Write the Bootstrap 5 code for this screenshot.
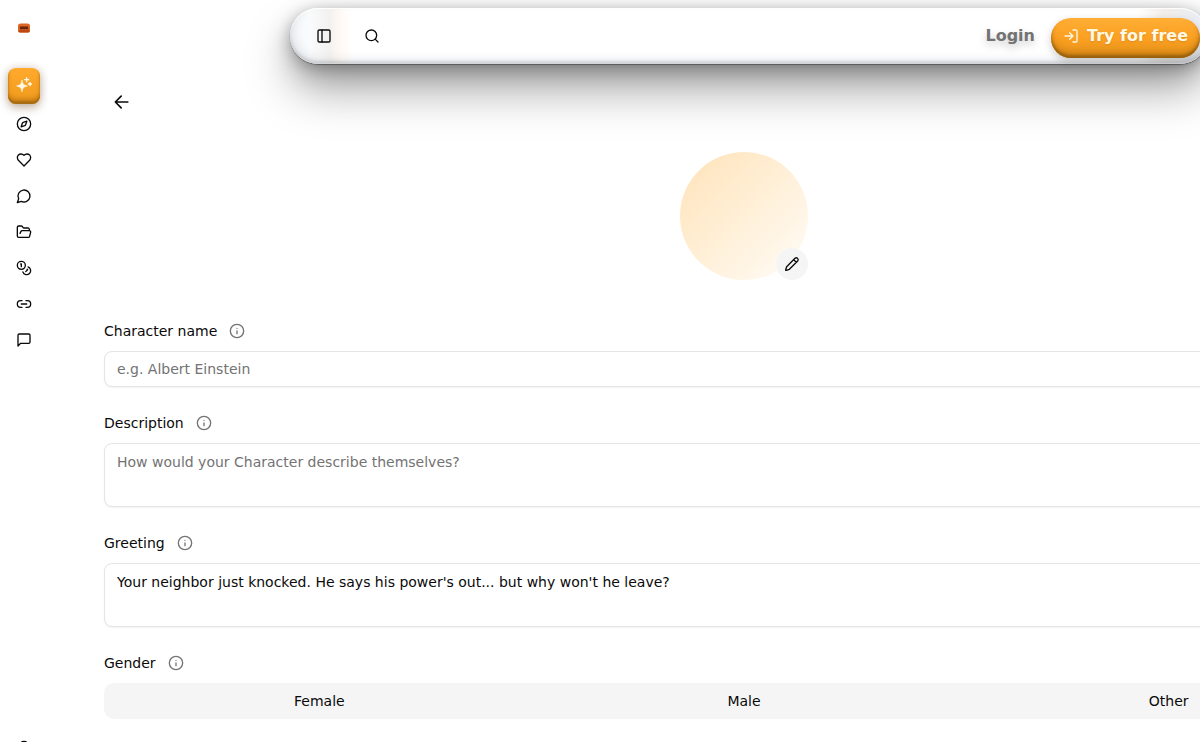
<!DOCTYPE html>
<html lang="en">
<head>
<meta charset="utf-8">
<meta name="viewport" content="width=device-width, initial-scale=1">
<title>Create character</title>
<link href="https://cdn.jsdelivr.net/npm/bootstrap@5.3.0/dist/css/bootstrap.min.css" rel="stylesheet">
<style>
body{font-family:"DejaVu Sans",sans-serif;font-size:14px;line-height:20px;color:#0a0a0a;background:#fff}
svg{display:block;flex:none;fill:none;stroke:currentColor;stroke-width:2;stroke-linecap:round;stroke-linejoin:round}
.i16{width:16px;height:16px}
.shell{height:100vh}
.side{width:48px;height:764px;padding:20px 8px 0}
.side a,.tool{color:#0a0a0a;width:32px;height:32px;display:flex;align-items:center;justify-content:center;padding:0;border:0;background:none}
.side .brand{height:16px;margin-bottom:32px}
.brand svg{stroke:none}
.side .create{height:36px;padding-bottom:3px;border-radius:8px;color:#fffbe8;background:linear-gradient(#ffaa2e,#f09a1c);box-shadow:inset 0 -3px 2px #a96c14,inset 0 -6px 4px #d1861a,0 4px 10px rgba(90,50,0,.3),0 0 8px rgba(90,50,0,.18)}
.create .star{fill:currentColor;stroke-width:1}
.topbar{height:56px;margin:8px -8px 0 242px;padding:0 8px 0 18px;border-radius:28px;position:relative;
background:linear-gradient(90deg,#f6f7f9 0,#fafbfc 20px,#f3f1f0 40px,#fff9f4 50px,#fff 62px,#fff calc(100% - 70px),#f1eee9 calc(100% - 44px),#e8edf5);
box-shadow:inset 0 -1px 0 #d4d5d8,inset 0 -3px 3px rgba(0,0,0,.12),inset 0 1px 1px #fff,inset 4px -5px 9px rgba(80,95,120,.12),0 1px 1px rgba(0,0,0,.35),0 3px 14px rgba(0,0,0,.2),0 8px 24px rgba(0,0,0,.22),0 26px 46px rgba(0,0,0,.34)}
.login{font-size:16px;line-height:24px;color:#737373;text-shadow:0 4px 8px rgba(0,0,0,.22)}
.try{font-size:16px;line-height:24px;height:40px;padding:0 12px 4px;margin-top:4px;border:0;border-radius:20px;color:#fff8e3;background:linear-gradient(#ffae35,#fba022 50%,#e8951b);box-shadow:inset 0 -3px 3px #96600f,inset 0 -7px 7px rgba(160,95,5,.35),0 3px 8px rgba(0,0,0,.2);text-shadow:0 1px 2px rgba(120,65,0,.2)}
.editor{width:1280px;margin:22px 0 0 56px;flex:none}
.back{margin-left:2px}
.portrait{width:128px;height:128px;margin:34px auto 41px;border-radius:50%;background:linear-gradient(135deg,#ffe2b8,#fffdf8);position:relative}
.edit{right:0;bottom:0;border-radius:50%;background:#f5f5f5}
.edit,.edit:hover{color:#0a0a0a}
.field{margin-bottom:26px}
.cap{gap:12px;margin-bottom:10px}
.cap svg{color:#737373}
.box{font-size:14px;line-height:20px;padding:7px 12px;height:36px;border:1px solid #e5e5e5;border-radius:8px;color:#0a0a0a;box-shadow:0 1px 2px rgba(0,0,0,.05);resize:none}
textarea.box{height:64px;padding-top:8px}
.box::placeholder{color:#737373}
.seg{height:36px;padding:3px;border-radius:10px;background:#f5f5f5}
.seg button{border:0;background:none;color:#0a0a0a;padding:0}
</style>
</head>
<body>
<div class="shell d-flex overflow-hidden">
<nav class="side d-flex flex-column flex-shrink-0" aria-label="Main">
<a class="brand" href="#" aria-label="Home"><svg width="14" height="12" viewBox="0 0 14 12"><rect x="1" y="1.500" width="12" height="9" rx="2.500" fill="#df6420"/><rect x="1.500" y="8" width="11" height="2.500" rx="1.200" fill="#bd4811"/><path d="M3 4.500h8l.5 2.800H3z" fill="#672510"/></svg></a>
<a class="create" href="#" aria-label="Create"><svg class="i16" viewBox="0 0 24 24"><path class="star" d="M9 5c1.200 6 2 7 8 8.500-6 1.500-6.800 2.500-8 8.500-1.200-6-2-7-8-8.500 6-1.500 6.800-2.500 8-8.500z"/><path d="M16 1v6M13 4h6M21 8v5M18.500 10.500h5"/></svg></a>
<a class="mt-1" href="#" aria-label="Explore"><svg class="i16" viewBox="0 0 24 24"><circle cx="12" cy="12" r="10"/><path d="m16.240 7.760-1.804 5.411a2 2 0 0 1-1.265 1.265L7.760 16.240l1.804-5.411a2 2 0 0 1 1.265-1.265z"/></svg></a>
<a class="mt-1" href="#" aria-label="Favorites"><svg class="i16" viewBox="0 0 24 24"><path d="M19 14c1.490-1.460 3-3.210 3-5.500A5.500 5.500 0 0 0 16.500 3c-1.760 0-3 .5-4.500 2-1.500-1.500-2.740-2-4.500-2A5.500 5.500 0 0 0 2 8.500c0 2.300 1.500 4.050 3 5.500l7 7Z"/></svg></a>
<a class="mt-1" href="#" aria-label="Chats"><svg class="i16" viewBox="0 0 24 24"><path d="M7.900 20A9 9 0 1 0 4 16.100L2 22Z"/></svg></a>
<a class="mt-1" href="#" aria-label="Gallery"><svg class="i16" viewBox="0 0 24 24"><path d="m6 14 1.500-2.900A2 2 0 0 1 9.240 10H20a2 2 0 0 1 1.940 2.500l-1.540 6a2 2 0 0 1-1.950 1.500H4a2 2 0 0 1-2-2V5a2 2 0 0 1 2-2h3.900a2 2 0 0 1 1.690.9l.81 1.200a2 2 0 0 0 1.670.9H18a2 2 0 0 1 2 2v2"/></svg></a>
<a class="mt-1" href="#" aria-label="Coins"><svg class="i16" viewBox="0 0 24 24"><circle cx="8" cy="8" r="6"/><path d="M18.090 10.370A6 6 0 1 1 10.340 18M7 6h1v4M16.710 13.880l.7.710-2.820 2.820"/></svg></a>
<a class="mt-1" href="#" aria-label="Affiliate"><svg class="i16" viewBox="0 0 24 24"><path d="M9 17H7A5 5 0 0 1 7 7h2M15 7h2a5 5 0 1 1 0 10h-2M8 12h8"/></svg></a>
<a class="mt-1" href="#" aria-label="Feedback"><svg class="i16" viewBox="0 0 24 24"><path d="M21 15a2 2 0 0 1-2 2H7l-4 4V5a2 2 0 0 1 2-2h14a2 2 0 0 1 2 2z"/></svg></a>
<a class="mt-auto" href="#" aria-label="Account"><svg class="i16" viewBox="0 0 24 24"><circle cx="12" cy="7" r="5"/><path d="M20 22a8 8 0 0 0-16 0"/></svg></a>
</nav>
<div class="flex-grow-1 d-flex flex-column" style="min-width:0">
<header class="topbar d-flex align-items-center flex-shrink-0">
<button class="tool" type="button" aria-label="Toggle sidebar"><svg class="i16" viewBox="0 0 24 24"><rect x="3" y="3" width="18" height="18" rx="2"/><path d="M9 3v18"/></svg></button>
<button class="tool ms-3" type="button" aria-label="Search"><svg class="i16" viewBox="0 0 24 24"><circle cx="11" cy="11" r="8"/><path d="m21 21-4.300-4.300"/></svg></button>
<a class="login fw-bold text-decoration-none ms-auto me-3" href="#">Login</a>
<button class="try fw-bold d-flex align-items-center gap-2" type="button"><svg class="i16" viewBox="0 0 24 24"><path d="M15 3h4a2 2 0 0 1 2 2v14a2 2 0 0 1-2 2h-4M10 17l5-5-5-5M15 12H3"/></svg>Try for free</button>
</header>
<main class="editor">
<button class="tool back" type="button" aria-label="Back"><svg width="20" height="20" viewBox="0 0 24 24"><path d="m11 19-7-7 7-7M19 12H4"/></svg></button>
<div class="portrait"><button class="tool edit position-absolute" type="button" aria-label="Edit avatar"><svg class="i16" viewBox="0 0 24 24"><path d="M16.500 3.500a2.830 2.830 0 0 1 4 4L8 20l-4.500 1.500c-.7.200-1.200-.3-1-1L4 16ZM14.500 5.500l4 4"/></svg></button></div>
<form>
<div class="field"><div class="cap d-flex align-items-center"><label for="name">Character name</label><svg class="i16" viewBox="0 0 24 24"><circle cx="12" cy="12" r="10"/><path d="M12 16v-4M12 8h.01"/></svg></div>
<input class="box form-control" id="name" type="text" placeholder="e.g. Albert Einstein"></div>
<div class="field"><div class="cap d-flex align-items-center"><label for="desc">Description</label><svg class="i16" viewBox="0 0 24 24"><circle cx="12" cy="12" r="10"/><path d="M12 16v-4M12 8h.01"/></svg></div>
<textarea class="box form-control" id="desc" placeholder="How would your Character describe themselves?"></textarea></div>
<div class="field"><div class="cap d-flex align-items-center"><label for="greet">Greeting</label><svg class="i16" viewBox="0 0 24 24"><circle cx="12" cy="12" r="10"/><path d="M12 16v-4M12 8h.01"/></svg></div>
<textarea class="box form-control" id="greet">Your neighbor just knocked. He says his power's out... but why won't he leave?</textarea></div>
<div class="field"><div class="cap d-flex align-items-center"><span id="gender">Gender</span><svg class="i16" viewBox="0 0 24 24"><circle cx="12" cy="12" r="10"/><path d="M12 16v-4M12 8h.01"/></svg></div>
<div class="seg row row-cols-3 g-0" role="group" aria-labelledby="gender"><button class="col" type="button">Female</button><button class="col" type="button">Male</button><button class="col" type="button">Other</button></div></div>
</form>
</main>
</div>
</div>
<script src="https://cdn.jsdelivr.net/npm/bootstrap@5.3.0/dist/js/bootstrap.bundle.min.js"></script>
</body>
</html>
